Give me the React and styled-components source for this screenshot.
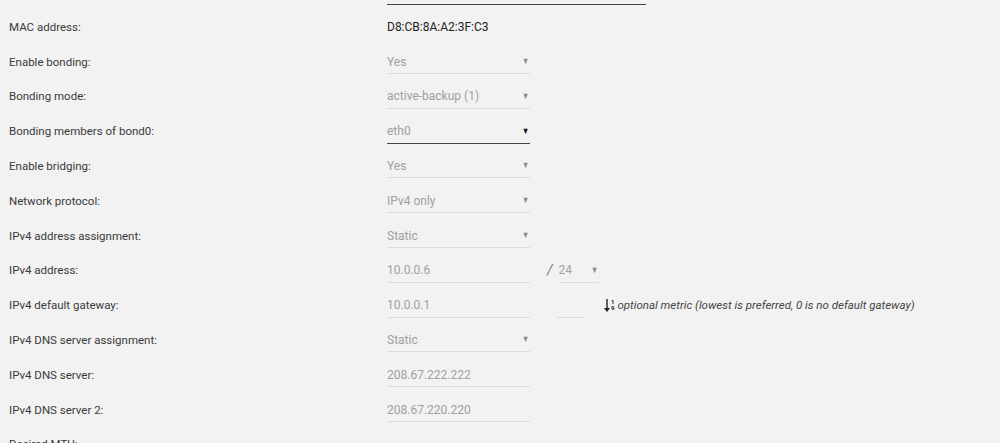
import React from 'react';
import styled, { createGlobalStyle } from 'styled-components';

const GlobalStyle = createGlobalStyle`
  html, body {
    margin: 0;
    padding: 0;
    background: #f2f2f2;
    overflow: hidden;
  }
  body {
    font-family: Roboto, "Liberation Sans", Arial, sans-serif;
    font-size: 12px;
    color: #333;
  }
`;

const Form = styled.div`
  display: flex;
  flex-direction: column;
  margin-top: -25.4px;
  padding-left: 9px;
`;

const Row = styled.div`
  display: grid;
  grid-template-columns: 378px auto;
  align-items: center;
  height: 34.8px;
`;

const Label = styled.div`
  color: #3a3a3a;
  font-size: 11.5px;
  white-space: nowrap;
`;

const Controls = styled.div`
  display: flex;
  align-items: center;
`;

const Field = styled.div`
  position: relative;
  display: flex;
  align-items: center;
  width: ${p => p.$width || 143}px;
  height: 24px;
  box-sizing: border-box;
  border-bottom: 1px solid ${p => (p.$active ? '#444' : '#dcdcdc')};
  color: #a0a0a0;
  margin-top: 1px;
`;

const Arrow = styled.span`
  position: absolute;
  right: 0;
  top: 6px;
  font-size: 9px;
  transform: scaleX(0.8);
  color: ${p => (p.$active ? '#111' : '#8a8a8a')};
`;

const Value = styled.div`
  color: #222;
`;

const Slash = styled.span`
  color: #777;
  margin: 0 6px 0 17px;
  font-size: 14px;
  font-style: italic;
`;

const Metric = styled(Field)`
  margin-left: 27px;
`;

const Hint = styled.div`
  display: flex;
  align-items: center;
  margin-left: 19px;
  font-style: italic;
  color: #444;
  font-size: 11.5px;
`;

const SortIcon = styled.span`
  display: inline-flex;
  align-items: center;
  margin-right: 3px;
  font-style: normal;
  color: #222;
`;

const Digits = styled.span`
  display: flex;
  flex-direction: column;
  font-size: 6px;
  line-height: 6px;
  font-weight: bold;
  margin-left: 1px;
`;

const Select = ({ value, active, width }) => (
  <Field $active={active} $width={width}>
    {value}
    <Arrow $active={active}>▼</Arrow>
  </Field>
);

const SortNumeric = () => (
  <SortIcon>
    <svg width="6" height="13" viewBox="0 0 6 13">
      <path d="M2.3 0h1.4v9H6L3 13 0 9h2.3z" fill="#222" />
    </svg>
    <Digits>
      <span>1</span>
      <span>9</span>
    </Digits>
  </SortIcon>
);

const App = () => (
  <>
    <GlobalStyle />
    <Form>
      <Row>
        <Label />
        <Controls>
          <Field $width={259} $active />
        </Controls>
      </Row>
      <Row>
        <Label>MAC address:</Label>
        <Value>D8:CB:8A:A2:3F:C3</Value>
      </Row>
      <Row>
        <Label>Enable bonding:</Label>
        <Controls><Select value="Yes" /></Controls>
      </Row>
      <Row>
        <Label>Bonding mode:</Label>
        <Controls><Select value="active-backup (1)" /></Controls>
      </Row>
      <Row>
        <Label>Bonding members of bond0:</Label>
        <Controls><Select value="eth0" active /></Controls>
      </Row>
      <Row>
        <Label>Enable bridging:</Label>
        <Controls><Select value="Yes" /></Controls>
      </Row>
      <Row>
        <Label>Network protocol:</Label>
        <Controls><Select value="IPv4 only" /></Controls>
      </Row>
      <Row>
        <Label>IPv4 address assignment:</Label>
        <Controls><Select value="Static" /></Controls>
      </Row>
      <Row>
        <Label>IPv4 address:</Label>
        <Controls>
          <Field>10.0.0.6</Field>
          <Slash>/</Slash>
          <Select value="24" width={40} />
        </Controls>
      </Row>
      <Row>
        <Label>IPv4 default gateway:</Label>
        <Controls>
          <Field>10.0.0.1</Field>
          <Metric $width={28} />
          <Hint>
            <SortNumeric />
            optional metric (lowest is preferred, 0 is no default gateway)
          </Hint>
        </Controls>
      </Row>
      <Row>
        <Label>IPv4 DNS server assignment:</Label>
        <Controls><Select value="Static" /></Controls>
      </Row>
      <Row>
        <Label>IPv4 DNS server:</Label>
        <Controls><Field>208.67.222.222</Field></Controls>
      </Row>
      <Row>
        <Label>IPv4 DNS server 2:</Label>
        <Controls><Field>208.67.220.220</Field></Controls>
      </Row>
      <Row>
        <Label>Desired MTU:</Label>
        <Controls />
      </Row>
    </Form>
  </>
);

export default App;
